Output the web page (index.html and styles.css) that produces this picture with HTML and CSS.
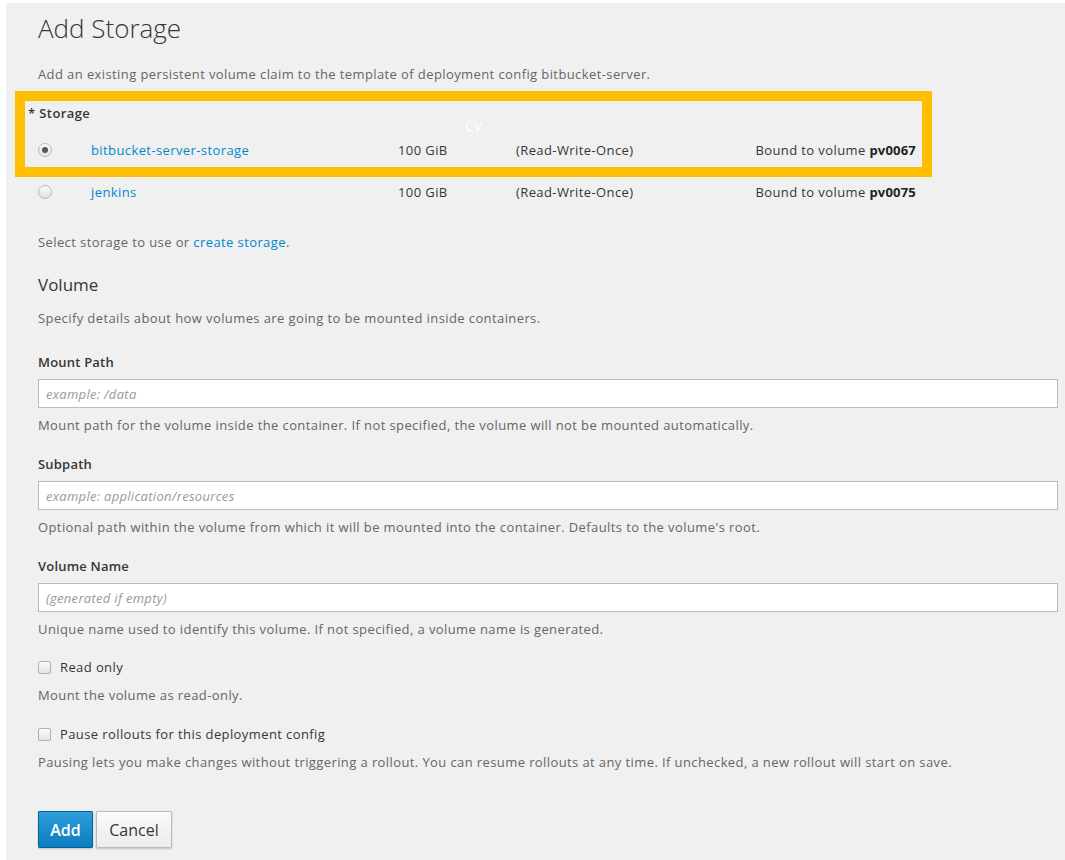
FILE: index.html
```html
<!DOCTYPE html>
<html>
<head>
<meta charset="utf-8">
<link rel="stylesheet" href="styles.css">
</head>
<body>
<div class="panel">
  <h1 class="title">Add Storage</h1>
  <p class="intro">Add an existing persistent volume claim to the template of deployment config bitbucket-server.</p>

  <div class="storage-label">* Storage</div>
  <div class="claims">
    <div class="claim">
      <span class="radio checked"></span>
      <a class="claim-name">bitbucket-server-storage</a>
      <span class="claim-size">100 GiB</span>
      <span class="claim-mode">(Read-Write-Once)</span>
      <span class="claim-bound">Bound to volume <b>pv0067</b></span>
    </div>
    <div class="claim">
      <span class="radio"></span>
      <a class="claim-name">jenkins</a>
      <span class="claim-size">100 GiB</span>
      <span class="claim-mode">(Read-Write-Once)</span>
      <span class="claim-bound">Bound to volume <b>pv0075</b></span>
    </div>
  </div>
  <p class="select-hint">Select storage to use or <a class="link">create storage</a>.</p>

  <h2 class="section">Volume</h2>
  <p class="section-desc">Specify details about how volumes are going to be mounted inside containers.</p>

  <div class="field">
    <label class="field-label">Mount Path</label>
    <div class="input"><span class="placeholder">example: /data</span></div>
    <p class="help">Mount path for the volume inside the container. If not specified, the volume will not be mounted automatically.</p>
  </div>
  <div class="field">
    <label class="field-label">Subpath</label>
    <div class="input"><span class="placeholder">example: application/resources</span></div>
    <p class="help">Optional path within the volume from which it will be mounted into the container. Defaults to the volume's root.</p>
  </div>
  <div class="field">
    <label class="field-label">Volume Name</label>
    <div class="input"><span class="placeholder">(generated if empty)</span></div>
    <p class="help">Unique name used to identify this volume. If not specified, a volume name is generated.</p>
  </div>

  <div class="check-field">
    <div class="check"><span class="checkbox"></span><span>Read only</span></div>
    <p class="check-help">Mount the volume as read-only.</p>
  </div>
  <div class="check-field">
    <div class="check"><span class="checkbox"></span><span>Pause rollouts for this deployment config</span></div>
    <p class="check-help">Pausing lets you make changes without triggering a rollout. You can resume rollouts at any time. If unchecked, a new rollout will start on save.</p>
  </div>

  <div class="buttons">
    <button class="btn btn-primary">Add</button>
    <button class="btn btn-default">Cancel</button>
  </div>

  <div class="highlight"><span class="cv">CV</span></div>
</div>
</body>
</html>
```

FILE: styles.css
```css
html, body {
  margin: 0;
  padding: 0;
  background: #ffffff;
}
body {
  font-family: "Open Sans", "Noto Sans", sans-serif;
  font-size: 13px;
  letter-spacing: 0.4px;
  color: #363636;
}
.panel {
  position: relative;
  margin: 3px 0 0 6px;
  background: #f0f0f0;
  padding: 10px 7px 12px 32px;
  min-height: 845px;
  box-sizing: border-box;
}
p { margin: 0; }
.title {
  margin: 0;
  font-size: 26px;
  font-weight: 300;
  line-height: 30px;
  letter-spacing: normal;
  color: #363636;
}
.intro {
  margin-top: 22px;
  line-height: 18px;
  color: #666;
}
.storage-label {
  margin: 21px 0 0 -10px;
  line-height: 18px;
  font-weight: 600;
  color: #363636;
}
.claims {
  margin-top: 7px;
  width: 878px;
}
.claim {
  display: grid;
  grid-template-columns: 53px 307px 118px 1fr auto;
  align-items: center;
  height: 42px;
  color: #363636;
}
.claim b { font-weight: 700; color: #222; letter-spacing: 0.2px; }
.claim-name { color: #0088ce; }
.radio {
  width: 12px;
  height: 12px;
  border-radius: 50%;
  border: 1px solid #b7b7b7;
  background: linear-gradient(#fafafa, #e2e2e2);
  box-sizing: content-box;
  position: relative;
}
.radio.checked::after {
  content: "";
  position: absolute;
  left: 3px;
  top: 3px;
  width: 6px;
  height: 6px;
  border-radius: 50%;
  background: #555;
}
.select-hint {
  margin-top: 20px;
  line-height: 18px;
  color: #666;
}
.link { color: #0088ce; }
.section {
  margin: 23px 0 0 0;
  font-size: 17px;
  font-weight: 400;
  line-height: 22px;
  letter-spacing: normal;
  color: #363636;
}
.section-desc {
  margin-top: 13px;
  line-height: 18px;
  color: #666;
}
.field { margin-top: 26px; }
.field + .field { margin-top: 21px; }
.field-label {
  display: block;
  line-height: 18px;
  font-weight: 600;
  letter-spacing: 0.2px;
  color: #363636;
}
.input {
  margin-top: 8px;
  height: 29px;
  border: 1px solid #bbbbbb;
  background: #ffffff;
  box-sizing: border-box;
  display: flex;
  align-items: center;
  padding-left: 7px;
}
.placeholder {
  font-style: italic;
  color: #999;
  font-size: 13px;
  letter-spacing: 0.3px;
}
.help {
  margin-top: 8px;
  line-height: 18px;
  color: #666;
}
.check-field { margin-top: 20px; }
.check-field + .check-field { margin-top: 21px; }
.check {
  display: flex;
  align-items: center;
  gap: 9px;
  line-height: 18px;
  color: #363636;
}
.checkbox {
  width: 11px;
  height: 11px;
  border: 1px solid #b0b0b0;
  border-radius: 2px;
  background: linear-gradient(#fbfbfb, #e4e4e4);
}
.check-help {
  margin-top: 10px;
  line-height: 18px;
  color: #666;
}
.buttons {
  margin-top: 40px;
  display: flex;
  gap: 3px;
}
.btn {
  font-family: "Open Sans", "Noto Sans", sans-serif;
  font-size: 16px;
  letter-spacing: normal;
  height: 37px;
  padding: 0 12px;
  border-radius: 1px;
  cursor: pointer;
  box-shadow: 0 1px 2px rgba(0,0,0,0.2);
}
.btn-primary {
  width: 55px;
  padding: 0;
  color: #fff;
  background: linear-gradient(#2f9fdb, #0a7dc0);
  border: 1px solid #00659c;
  font-weight: 600;
}
.btn-default {
  width: 76px;
  padding: 0;
  color: #363636;
  background: linear-gradient(#fafafa, #ececec);
  border: 1px solid #bbb;
}
.highlight {
  position: absolute;
  left: 9px;
  top: 88px;
  width: 917px;
  height: 86px;
  border: 10px solid #ffbf00;
  box-sizing: border-box;
}
.cv {
  position: absolute;
  left: 440px;
  top: 15px;
  font-size: 14px;
  letter-spacing: normal;
  color: #ffffff;
}
```
